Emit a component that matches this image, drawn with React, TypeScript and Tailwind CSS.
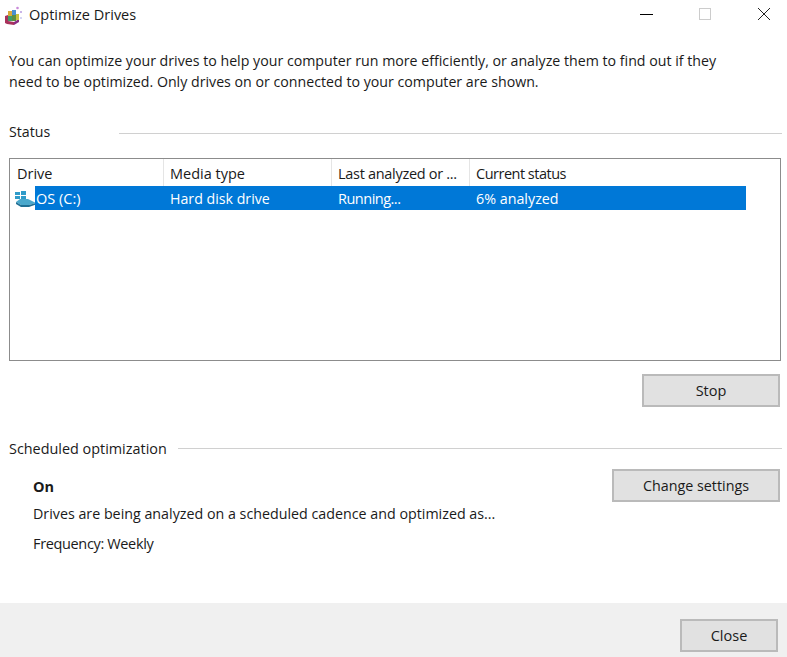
const font = "font-['Open_Sans','Noto_Sans',sans-serif]";

function AppIcon() {
  return (
    <svg width="19" height="20" viewBox="0 0 19 20" className="shrink-0">
      <path d="M1 10 L4 9 L4 15 L10 16 L10 19 L3 18 L1 17 Z" fill="#a8325c" />
      <path d="M10 16 L15 13 L15 16 L10 19 Z" fill="#8b2d80" />
      <rect x="4" y="5" width="4" height="5" fill="#d9a93a" />
      <rect x="8" y="4" width="4" height="5" fill="#4a8fd0" />
      <rect x="4" y="10" width="4" height="5" fill="#3f9d6a" />
      <rect x="8" y="9" width="4" height="6" fill="#5d8f3e" />
      <rect x="12" y="8" width="3" height="6" fill="#c7c23f" />
      <circle cx="13.5" cy="2" r="1.3" fill="#c98ad9" />
      <circle cx="17" cy="6" r="1" fill="#b79be0" />
      <circle cx="17" cy="12" r="0.8" fill="#9fa3e6" />
    </svg>
  );
}

function DriveIcon() {
  return (
    <svg width="22" height="17" viewBox="0 0 22 17" className="shrink-0">
      <g fill="#2f9bc9">
        <rect x="0" y="1" width="5" height="3" />
        <rect x="6" y="0" width="5" height="4" />
        <rect x="0" y="5" width="5" height="3" />
        <rect x="6" y="5" width="5" height="3" />
      </g>
      <path d="M1 11 L5 8 L13 8 L21 12 L14 14 L6 14 Z" fill="#4aa8cc" />
      <path d="M1 11 L6 14 L14 14 L21 12 L21 13.5 L14 16 L6 16 L1 13 Z" fill="#1f6f94" />
    </svg>
  );
}

function Btn({ label, w, size = "text-[14.5px]" }: { label: string; w: string; size?: string }) {
  return (
    <button className={`${w} ${size} h-[33px] shrink-0 bg-[#e1e1e1] border-2 border-[#bababa] text-[#1a1a1a] flex items-center justify-center`}>
      {label}
    </button>
  );
}

function HeaderCell({ label, w, extra = "" }: { label: string; w: string; extra?: string }) {
  return (
    <div className={`${w} ${extra} h-[27px] pl-[6px] pt-[2px] text-[14.5px] flex items-center border-r border-[#e5e5e5] whitespace-nowrap`}>{label}</div>
  );
}

export default function App() {
  return (
    <div className={`${font} w-[787px] h-[657px] bg-white text-[14.2px] text-[#1a1a1a] flex flex-col overflow-hidden`}>
      <div className="h-[30px] flex items-center shrink-0">
        <div className="ml-[4px] w-[25px] pt-[1px]"><AppIcon /></div>
        <span className="text-[14.5px]">Optimize Drives</span>
        <div className="ml-auto flex items-center pb-[2px]">
          <div className="w-[13px] h-px bg-black" />
          <div className="ml-[46px] w-[12px] h-[12px] border border-[#cccccc]" />
          <svg width="14" height="14" viewBox="0 0 14 14" className="ml-[46px] mr-[16px]">
            <path d="M1 1 L13 13 M13 1 L1 13" stroke="#222" strokeWidth="1" />
          </svg>
        </div>
      </div>

      <p className="mt-[20px] ml-[9px] w-[760px] leading-[21px]">
        You can optimize your drives to help your computer run more efficiently, or analyze them to find out if they
        <br />
        need to be optimized. Only drives on or connected to your computer are shown.
      </p>

      <div className="mt-[29px] ml-[9px] mr-[5px] h-[22px] flex items-center">
        <span>Status</span>
        <div className="ml-[69px] mt-[2px] flex-1 h-px bg-[#d0d0d0]" />
      </div>

      <div className="mt-[15px] ml-[9px] w-[772px] h-[203px] shrink-0 border border-[#8c8c8c] flex flex-col">
        <div className="flex">
          <HeaderCell label="Drive" w="w-[154px]" extra="pl-[7px]" />
          <HeaderCell label="Media type" w="w-[168px]" />
          <HeaderCell label="Last analyzed or ..." w="w-[138px]" extra="tracking-[-0.3px]" />
          <div className="pl-[6px] pt-[2px] h-[27px] flex items-center text-[14.5px] tracking-[-0.5px]">Current status</div>
        </div>
        <div className="flex items-center h-[24px]">
          <div className="ml-[5px] w-[20px] pt-[3px]"><DriveIcon /></div>
          <div className="w-[711px] h-[24px] pt-[2px] bg-[#0078d7] text-white flex items-center">
            <span className="w-[135px] pl-[1px] text-[14.5px]">OS (C:)</span>
            <span className="w-[168px]">Hard disk drive</span>
            <span className="w-[138px] text-[14.5px] tracking-[-0.5px]">Running...</span>
            <span className="text-[14.3px]">6% analyzed</span>
          </div>
        </div>
      </div>

      <div className="mt-[13px] mr-[7px] flex justify-end">
        <Btn label="Stop" w="w-[138px]" />
      </div>

      <div className="mt-[31px] ml-[9px] mr-[5px] h-[22px] flex items-center">
        <span className="text-[14.4px]">Scheduled optimization</span>
        <div className="ml-[11px] mb-[2px] flex-1 h-px bg-[#d0d0d0]" />
      </div>

      <div className="ml-[33px] mr-[7px] flex justify-between items-start">
        <div className="mt-[16px] flex flex-col">
          <span className="font-bold leading-[21px] text-[14.5px]">On</span>
          <span className="mt-[6px] leading-[21px] text-[14.28px]">Drives are being analyzed on a scheduled cadence and optimized as...</span>
          <span className="mt-[9px] leading-[21px] text-[14.5px] tracking-[-0.35px]">Frequency: Weekly</span>
        </div>
        <div className="mt-[9px]">
          <Btn label="Change settings" w="w-[168px]" size="text-[14.3px]" />
        </div>
      </div>

      <div className="mt-auto h-[54px] bg-[#f0f0f0] shrink-0 flex justify-end items-start pt-[16px] pr-[9px]">
        <Btn label="Close" w="w-[98px]" />
      </div>
    </div>
  );
}
